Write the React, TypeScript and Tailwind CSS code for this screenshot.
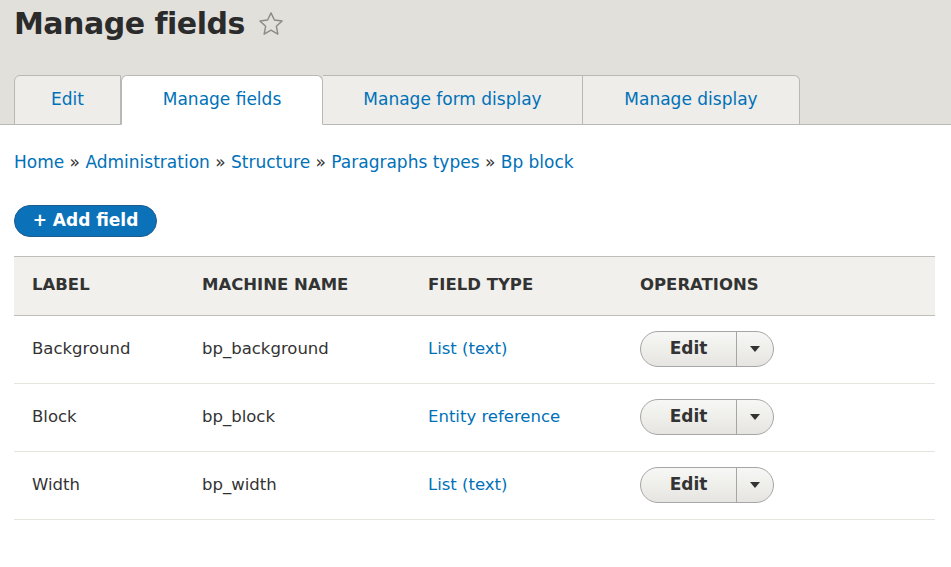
export default function App() {
  const rows = [
    ["Background", "bp_background", "List (text)"],
    ["Block", "bp_block", "Entity reference"],
    ["Width", "bp_width", "List (text)"],
  ];
  return (
    <div className="w-[951px] h-[567px] bg-white text-[#333] overflow-hidden" style={{ fontFamily: '"DejaVu Sans", "Open Sans", sans-serif' }}>
      <div className="bg-[#e1e0db] border-b border-[#b8b8b4] h-[125px] flex flex-col">
        <div className="flex items-center gap-3 pl-[14px] h-[48px]">
          <h1 className="text-[30px] font-bold text-[#2b2b2b] leading-none tracking-[-0.5px]">Manage fields</h1>
          <svg width="28" height="28" viewBox="0 0 24 24" fill="none" stroke="#8a8a86" strokeWidth="1.2" strokeLinejoin="round"><path d="M12 2.5l2.9 6.1 6.6.8-4.9 4.6 1.3 6.6L12 17.3l-5.9 3.3 1.3-6.6-4.9-4.6 6.6-.8z" /></svg>
        </div>
        <div className="flex pl-[14px] mt-auto h-[50px] text-[17px] text-[#0071b8] -mb-px">
          <div className="w-[107px] flex items-center justify-center bg-[#eeedea] border border-[#b8b8b4] rounded-tl-md">Edit</div>
          <div className="w-[202px] flex items-center justify-center bg-white border border-[#b8b8b4] border-b-white rounded-t-md">Manage fields</div>
          <div className="w-[260px] flex items-center justify-center bg-[#eeedea] border border-l-0 border-[#b8b8b4]">Manage form display</div>
          <div className="w-[217px] flex items-center justify-center bg-[#eeedea] border border-l-0 border-[#b8b8b4] rounded-tr-md">Manage display</div>
        </div>
      </div>
      <div className="px-[14px]">
        <div className="mt-[25px] text-[17px] text-[#0071b8]">
          Home <span className="text-[#333]">»</span> Administration <span className="text-[#333]">»</span> Structure <span className="text-[#333]">»</span> Paragraphs types <span className="text-[#333]">»</span> Bp block
        </div>
        <button className="mt-[29px] h-[32px] w-[143px] rounded-full bg-[#0b72b9] border border-[#1e5c90] text-white text-[17px] font-bold">+ Add field</button>
        <table className="mt-[19px] w-[921px] text-[16.5px] border-collapse">
          <thead>
            <tr className="bg-[#f1f0ed] border-t border-b border-[#bfbfba] h-[59px] text-left">
              <th className="pl-[18px] w-[188px] font-bold">LABEL</th>
              <th className="w-[226px] font-bold">MACHINE NAME</th>
              <th className="w-[212px] font-bold">FIELD TYPE</th>
              <th className="font-bold">OPERATIONS</th>
            </tr>
          </thead>
          <tbody>
            {rows.map((r) => (
              <tr key={r[1]} className="h-[68px] border-b border-[#e6e4df]">
                <td className="pl-[18px]">{r[0]}</td>
                <td>{r[1]}</td>
                <td className="text-[#0071b8]">{r[2]}</td>
                <td>
                  <div className="flex w-[134px] h-[36px] rounded-full border border-[#a6a6a6] bg-gradient-to-b from-[#f7f7f5] to-[#e6e5e1] overflow-hidden">
                    <div className="flex-1 flex items-center justify-center font-bold text-[17px]">Edit</div>
                    <div className="w-[37px] border-l border-[#a6a6a6] flex items-center justify-center">
                      <svg width="10" height="6" viewBox="0 0 10 6"><path d="M0 0h10L5 6z" fill="#333" /></svg>
                    </div>
                  </div>
                </td>
              </tr>
            ))}
          </tbody>
        </table>
      </div>
    </div>
  );
}
